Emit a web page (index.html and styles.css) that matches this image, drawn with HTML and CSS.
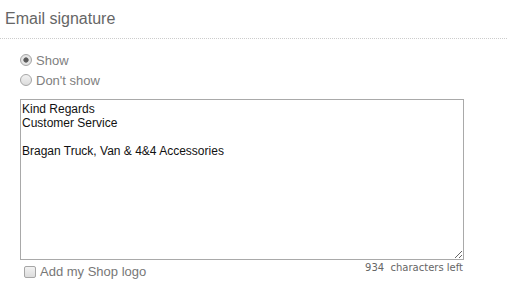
FILE: index.html
```html
<!DOCTYPE html>
<html lang="en">
<head>
    <meta charset="UTF-8">
    <title>Email signature</title>
    <link rel="stylesheet" href="styles.css">
</head>
<body>

<div class="signature-section">
    <h2 class="section-title">Email signature</h2>

    <div class="options">
        <label class="option"><input type="radio" name="show" checked> Show</label>
        <label class="option"><input type="radio" name="show"> Don't show</label>
    </div>

    <textarea class="signature-text" id="signature-text">Kind Regards
Customer Service

Bragan Truck, Van &amp; 4&amp;4 Accessories</textarea>

    <div class="signature-footer">
        <label class="logo-option"><input type="checkbox"> Add my Shop logo</label>
        <span class="chars-left"><span id="chars-left">934</span>&nbsp; characters left</span>
    </div>
</div>

</body>
</html>
```

FILE: styles.css
```css
* {
    margin: 0;
    padding: 0;
    box-sizing: border-box;
}

body {
    font-family: 'Liberation Sans', Arial, sans-serif;
    background-color: #fff;
    color: #333;
}

.section-title {
    font-size: 16px;
    font-weight: normal;
    color: #666;
    padding: 10px 0 10px 5px;
    border-bottom: 1px dotted #ccc;
}

.options {
    display: flex;
    flex-direction: column;
    padding: 11px 0 0 20px;
}

.option {
    display: flex;
    align-items: center;
    gap: 4px;
    height: 20px;
    font-size: 13px;
    color: #808080;
}

/* greyed-out native look */
.option input,
.logo-option input {
    appearance: none;
    -webkit-appearance: none;
    width: 12px;
    height: 12px;
    margin: 0;
    border: 1px solid #a6a6a6;
    background: linear-gradient(#f2f2f2, #dcdcdc);
}

.option input {
    border-radius: 50%;
}

.option input:checked {
    background: radial-gradient(circle, #5a5a5a 0 2px, #8a8a8a 2.5px, #e6e6e6 3px, #dcdcdc 100%);
}

.logo-option input {
    border-radius: 2px;
}

.signature-text {
    display: block;
    width: 444px;
    height: 161px;
    margin: 9px 0 0 20px;
    padding: 2px 1px;
    border: 1px solid #a9a9a9;
    font-family: 'Liberation Sans', Arial, sans-serif;
    font-size: 12px;
    line-height: 14px;
    color: #111;
    resize: vertical;
}

.signature-footer {
    display: flex;
    justify-content: space-between;
    align-items: flex-start;
    width: 444px;
    margin-left: 20px;
    padding-top: 4px;
}

.logo-option {
    display: flex;
    align-items: center;
    gap: 4px;
    padding-left: 4px;
    font-size: 13px;
    color: #777;
}

.chars-left {
    font-family: 'DejaVu Sans', Verdana, sans-serif;
    font-size: 10px;
    color: #666;
    margin: -2px 1px 0 0;
}
```
